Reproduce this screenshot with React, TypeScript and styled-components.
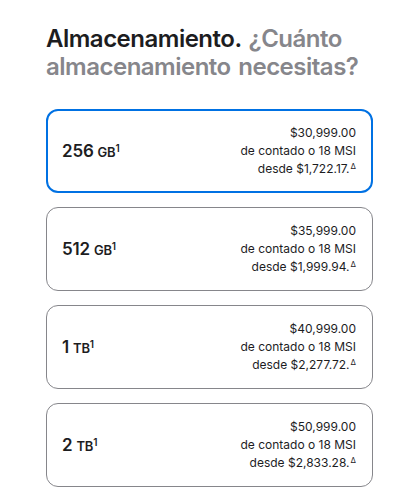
import React from 'react';
import styled, { createGlobalStyle } from 'styled-components';

// ----- global -----
const GlobalStyle = createGlobalStyle`
  html, body {
    margin: 0;
    padding: 0;
    background: #fff;
  }
  body {
    font-family: Inter, "Noto Sans", "Liberation Sans", sans-serif;
    color: #1d1d1f;
    -webkit-font-smoothing: antialiased;
  }
`;

// ----- styled-components -----
const Page = styled.main`
  width: 408px;
  padding: 25px 35px 0 46px;
  box-sizing: border-box;
`;

const Heading = styled.h2`
  margin: 0 0 28px;
  font-size: 24px;
  line-height: 28px;
  font-weight: 600;
  letter-spacing: -0.5px;
  word-spacing: 2px;
  color: #1d1d1f;
`;

const Muted = styled.span`
  color: #86868b;
`;

const OptionList = styled.div`
  display: flex;
  flex-direction: column;
  gap: 14px;
`;

const OptionCard = styled.div<{ $selected?: boolean }>`
  display: flex;
  align-items: center;
  justify-content: space-between;
  height: 84px;
  box-sizing: border-box;
  border-radius: 12px;
  border: ${({ $selected }) => ($selected ? '2px solid #0071e3' : '1px solid #86868b')};
  padding-left: ${({ $selected }) => ($selected ? '14px' : '15px')};
  padding-right: ${({ $selected }) => ($selected ? '15px' : '16px')};
`;

const Capacity = styled.span`
  font-size: 17px;
  font-weight: 600;
  letter-spacing: -0.2px;
  color: #1d1d1f;
`;

const Unit = styled.span`
  font-size: 13px;
  margin-left: 4px;
`;

const Sup = styled.sup`
  font-size: 10px;
  vertical-align: 5px;
  line-height: 0;
`;

const Price = styled.div`
  text-align: right;
  font-size: 12px;
  line-height: 18px;
  color: #1d1d1f;
`;

const Delta = styled.sup`
  font-size: 8px;
  vertical-align: 4px;
  line-height: 0;
  margin-left: 1px;
`;

// ----- data -----
const options = [
  { size: '256', unit: 'GB', price: '$30,999.00', monthly: '$1,722.17.' },
  { size: '512', unit: 'GB', price: '$35,999.00', monthly: '$1,999.94.' },
  { size: '1', unit: 'TB', price: '$40,999.00', monthly: '$2,277.72.' },
  { size: '2', unit: 'TB', price: '$50,999.00', monthly: '$2,833.28.' },
];

const App: React.FC = () => {
  return (
    <>
      <GlobalStyle />
      <Page>
        <Heading>
          Almacenamiento.{' '}
          <Muted>¿Cuánto almacenamiento necesitas?</Muted>
        </Heading>

        <OptionList>
          {options.map((opt, i) => (
            <OptionCard key={opt.size + opt.unit} $selected={i === 0}>
              <Capacity>
                {opt.size}
                <Unit>{opt.unit}</Unit>
                <Sup>1</Sup>
              </Capacity>
              <Price>
                {opt.price}
                <br />
                de contado o 18 MSI
                <br />
                desde {opt.monthly}
                <Delta>Δ</Delta>
              </Price>
            </OptionCard>
          ))}
        </OptionList>
      </Page>
    </>
  );
};

export default App;
